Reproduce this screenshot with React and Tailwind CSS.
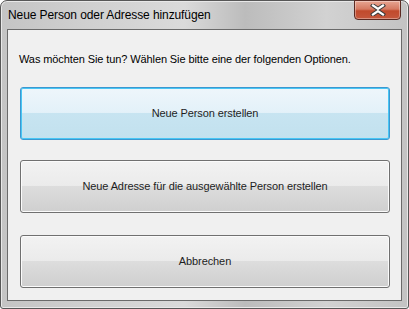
const font = { fontFamily: '"Segoe UI", "Liberation Sans", Arial, sans-serif' }

function CloseButton() {
  return (
    <div className="absolute right-[7px] top-[-1px] flex h-[20px] w-[47px] items-center justify-center rounded-b-[4px] border border-[#5b2a22] bg-[linear-gradient(#e7a592_0%,#d57a62_45%,#c14a2c_55%,#c5573c_100%)] shadow-[inset_0_0_0_1px_rgba(255,255,255,0.35)]">
      <svg width="16" height="12" viewBox="0 0 16 12">
        <path d="M3 1.5 L8 5 L13 1.5 M3 10.5 L8 7 L13 10.5" fill="none" stroke="#3b3b3b" strokeWidth="4.2" strokeLinecap="square" />
        <path d="M3 1.5 L8 5 L13 1.5 M3 10.5 L8 7 L13 10.5" fill="none" stroke="#ffffff" strokeWidth="2.2" strokeLinecap="square" />
      </svg>
    </div>
  )
}

function WinButton({ children, focused = false }) {
  const outer = focused
    ? 'border-[#3c97d0] shadow-[inset_0_0_0_1px_#48c6f4]'
    : 'border-[#707070] shadow-[inset_0_0_0_1px_#fbfbfb]'
  const fill = focused
    ? 'bg-[linear-gradient(#eef6fb_0%,#e3f1f9_48%,#c7e4f1_49%,#c2e1ee_100%)]'
    : 'bg-[linear-gradient(#f2f2f2_0%,#ebebeb_48%,#dddddd_49%,#cfcfcf_100%)]'
  return (
    <div className={`flex h-[53px] items-center justify-center whitespace-nowrap rounded-[3px] border ${outer} ${fill} text-[11px] tracking-[-0.1px] text-[#1e1e1e]`}>
      {children}
    </div>
  )
}

export default function App() {
  return (
    <div className="h-[309px] w-[409px] bg-white" style={font}>
      <div className="relative flex h-[309px] w-[409px] flex-col rounded-t-[7px] rounded-b-[3px] border border-[#575757] bg-[linear-gradient(90deg,#c4c4c4_0%,#cfcfcf_20%,#dadada_45%,#bcbcbc_60%,#d2d2d2_80%,#c3c3c3_100%)] shadow-[inset_0_0_0_1px_#e8e8e8]">
        <div className="flex h-[28px] items-center whitespace-nowrap pl-[7px] text-[12px] tracking-[-0.1px] text-black">
          Neue Person oder Adresse hinzufügen
        </div>
        <CloseButton />
        <div className="mx-[6px] flex h-[272px] flex-col border border-[#6a6a6a] bg-[#f0f0f0] px-[11px]">
          <div className="mt-[21px] h-[16px] whitespace-nowrap text-[11px] leading-[16px] tracking-[-0.1px] text-black">
            Was möchten Sie tun? Wählen Sie bitte eine der folgenden Optionen.
          </div>
          <div className="mt-[20px] flex flex-col pl-[1px]">
            <WinButton focused>Neue Person erstellen</WinButton>
            <div className="h-[20px]" />
            <WinButton>Neue Adresse für die ausgewählte Person erstellen</WinButton>
            <div className="h-[22px]" />
            <WinButton>Abbrechen</WinButton>
          </div>
        </div>
      </div>
    </div>
  )
}
